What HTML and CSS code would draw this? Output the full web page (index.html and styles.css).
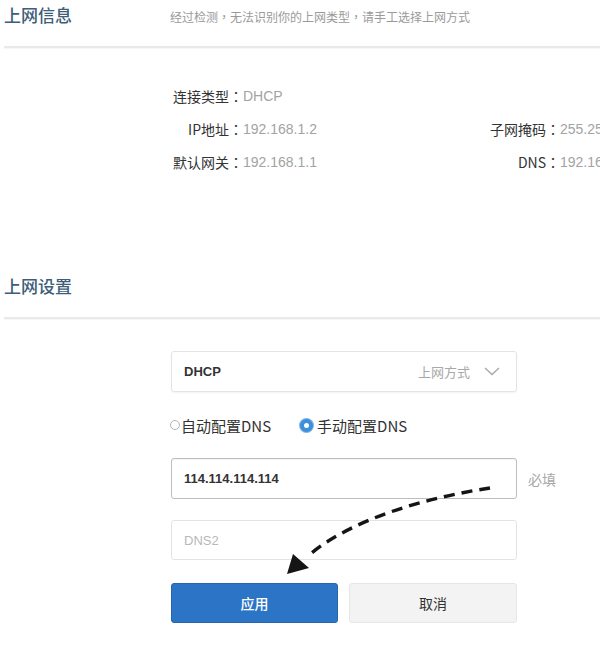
FILE: index.html
```html
<!DOCTYPE html>
<html lang="zh-CN">
<head>
<meta charset="utf-8">
<title>上网设置</title>
<link rel="stylesheet" href="styles.css">
</head>
<body>
<div class="page">
  <header class="sec-head">
    <h2 class="sec-title">上网信息</h2>
    <p class="sec-sub">经过检测<span class="p" lang="zh-TW">，</span>无法识别你的上网类型<span class="p" lang="zh-TW">，</span>请手工选择上网方式</p>
  </header>

  <div class="info">
    <span class="lbl">连接类型<span class="p" lang="zh-TW">：</span></span><span class="val">DHCP</span><span></span><span></span>
    <span class="lbl">IP地址<span class="p" lang="zh-TW">：</span></span><span class="val">192.168.1.2</span><span class="lbl">子网掩码<span class="p" lang="zh-TW">：</span></span><span class="val">255.255.255.0</span>
    <span class="lbl">默认网关<span class="p" lang="zh-TW">：</span></span><span class="val">192.168.1.1</span><span class="lbl">DNS<span class="p" lang="zh-TW">：</span></span><span class="val">192.168.1.1</span>
  </div>

  <header class="sec-head sec-head-2">
    <h2 class="sec-title">上网设置</h2>
  </header>

  <form class="form">
    <div class="select">
      <span class="select-val">DHCP</span>
      <span class="select-hint">上网方式</span>
      <svg class="chev" width="16" height="9" viewBox="0 0 16 9"><path d="M1 1 L8 7.5 L15 1" fill="none" stroke="#a8a8a8" stroke-width="1.4"/></svg>
    </div>

    <div class="radios">
      <label class="radio"><span class="dot"></span>自动配置DNS</label>
      <label class="radio on"><span class="dot"></span>手动配置DNS</label>
    </div>

    <div class="field-row">
      <div class="input focus">114.114.114.114</div>
      <span class="req">必填</span>
    </div>
    <div class="field-row">
      <div class="input placeholder">DNS2</div>
    </div>

    <div class="btns">
      <button type="button" class="btn primary">应用</button>
      <button type="button" class="btn">取消</button>
    </div>
  </form>

  <svg class="arrow" width="600" height="646" viewBox="0 0 600 646">
    <path d="M490 488 C 430 497, 352 518, 308 556" fill="none" stroke="#151515" stroke-width="3.4" stroke-dasharray="11 7"/>
    <polygon points="287,574 293,554 309,568" fill="#151515"/>
  </svg>
</div>
</body>
</html>
```

FILE: styles.css
```css
html, body {
  margin: 0;
  padding: 0;
  background: #fff;
  overflow: hidden;
}
body {
  width: 600px;
  height: 646px;
  font-family: "Liberation Sans", "Noto Sans CJK SC", sans-serif;
  color: #333;
}
.page {
  position: relative;
  width: 600px;
  height: 646px;
}
.p {
  font-family: "Noto Sans CJK TC", sans-serif;
}
.sec-head {
  display: flex;
  align-items: baseline;
  margin-left: 4px;
  height: 46px;
  border-bottom: 2px solid #e9e9e9;
  box-shadow: 0 1px 1px rgba(0,0,0,0.03);
}
.sec-title {
  margin: 4px 0 0 0;
  font-family: "Noto Sans CJK SC", sans-serif;
  font-size: 17px;
  line-height: 22px;
  font-weight: 500;
  color: #3e5d78;
  width: 166px;
  flex: none;
}
.sec-sub {
  margin: 0;
  font-family: "Noto Sans CJK SC", sans-serif;
  font-size: 12px;
  color: #9a9a9a;
  white-space: nowrap;
}
.info {
  display: grid;
  grid-template-columns: 243px 217px 100px 200px;
  grid-auto-rows: 20px;
  row-gap: 13px;
  margin-top: 38px;
  font-size: 14px;
  line-height: 20px;
  white-space: nowrap;
}
.lbl {
  text-align: right;
  font-family: "Noto Sans CJK SC", sans-serif;
  color: #333;
}
.val {
  color: #a3a3a3;
  font-size: 14px;
}
.sec-head-2 {
  margin-top: 99px;
  height: 46px;
}
.form {
  margin: 32px 0 0 171px;
  width: 346px;
  display: flex;
  flex-direction: column;
}
.select {
  height: 41px;
  box-sizing: border-box;
  border: 1px solid #e4e4e4;
  border-radius: 3px;
  box-shadow: 0 1px 2px rgba(0,0,0,0.05);
  display: flex;
  align-items: center;
  padding: 0 16px 0 12px;
}
.select-val {
  flex: 1;
  font-size: 13px;
  font-weight: bold;
  color: #333;
}
.select-hint {
  font-family: "Noto Sans CJK SC", sans-serif;
  font-size: 13px;
  color: #a8a8a8;
  margin-right: 14px;
}
.chev { display: block; }
.radios {
  display: flex;
  align-items: center;
  gap: 29px;
  margin-top: 23px;
  height: 20px;
}
.radio {
  display: flex;
  align-items: center;
  font-family: "Noto Sans CJK SC", sans-serif;
  font-size: 15px;
  color: #333;
  white-space: nowrap;
}
.dot {
  width: 10px;
  height: 10px;
  box-sizing: border-box;
  border: 1px solid #b5b5b5;
  border-radius: 50%;
  margin-left: -1px;
  margin-right: 1px;
}
.radio.on .dot {
  width: 13px;
  height: 13px;
  border: 4px solid #3d8fdb;
  background: #fff;
  margin-left: 0;
  margin-right: 4px;
  box-shadow: 0 0 0 1px #7fb4e6;
}
.field-row {
  display: flex;
  align-items: center;
  margin-top: 23px;
  width: 400px;
}
.field-row + .field-row { margin-top: 21px; }
.input {
  width: 346px;
  height: 41px;
  box-sizing: border-box;
  border: 1px solid #e3e3e3;
  border-radius: 3px;
  padding: 0 12px;
  display: flex;
  align-items: center;
  font-size: 13px;
  color: #333;
  font-weight: bold;
  flex: none;
}
.input.focus {
  border-color: #bdbdbd;
  box-shadow: inset 0 1px 1px rgba(0,0,0,0.05);
}
.input.placeholder {
  color: #b8b8b8;
  font-weight: normal;
  height: 40px;
}
.req {
  margin-left: 11px;
  font-family: "Noto Sans CJK SC", sans-serif;
  font-size: 14px;
  color: #a8a8a8;
}
.btns {
  display: flex;
  gap: 11px;
  margin-top: 23px;
}
.btn {
  height: 40px;
  border-radius: 3px;
  font-family: "Noto Sans CJK SC", sans-serif;
  font-size: 14px;
  border: 1px solid #e6e6e6;
  background: #f3f3f3;
  color: #333;
  padding: 0;
}
.btn.primary {
  width: 167px;
  background: #2c74c6;
  border-color: #2765ad;
  color: #fff;
  font-weight: 500;
}
.btn:not(.primary) { width: 168px; }
.arrow {
  position: absolute;
  left: 0;
  top: 0;
  pointer-events: none;
}
```
